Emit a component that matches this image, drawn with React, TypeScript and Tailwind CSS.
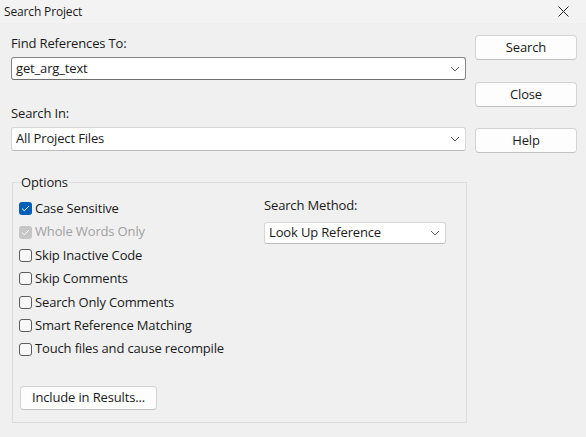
import React from 'react';

const FONT = "font-['Open_Sans','Noto_Sans',sans-serif] tracking-[-0.15px]";

const OPTIONS = [
  { label: 'Case Sensitive', state: 'checked' },
  { label: 'Whole Words Only', state: 'disabled' },
  { label: 'Skip Inactive Code', state: 'off' },
  { label: 'Skip Comments', state: 'off' },
  { label: 'Search Only Comments', state: 'off' },
  { label: 'Smart Reference Matching', state: 'off' },
  { label: 'Touch files and cause recompile', state: 'off' },
];

function Chevron() {
  return (
    <svg width="10" height="6" viewBox="0 0 10 6" className="text-[#606060]">
      <path d="M1 1l4 4 4-4" fill="none" stroke="currentColor" strokeWidth="1" />
    </svg>
  );
}

function Combo({ value, focused, className }: { value: string; focused?: boolean; className: string }) {
  return (
    <div
      className={`flex items-center justify-between bg-white rounded-[3px] border pl-[4px] pr-[5px] text-[13px] text-[#1a1a1a] ${
        focused ? 'border-[#858585] border-b-[#6f6f6f]' : 'border-[#d6d6d6] border-b-[#bcbcbc]'
      } ${className}`}
    >
      <span>{value}</span>
      <Chevron />
    </div>
  );
}

function Button({ label, className }: { label: string; className: string }) {
  return (
    <button
      type="button"
      className={`flex items-center justify-center bg-[#fdfdfd] border border-[#d4d4d4] border-b-[#c2c2c2] rounded-[4px] text-[13px] text-[#1a1a1a] ${className}`}
    >
      {label}
    </button>
  );
}

function Check({ state }: { state: string }) {
  if (state === 'off') {
    return <span className="w-[13px] h-[13px] rounded-[3px] border border-[#5c5c5c] bg-[#f8f8f8]" />;
  }
  return (
    <span
      className={`w-[13px] h-[13px] rounded-[3px] flex items-center justify-center ${
        state === 'checked' ? 'bg-[#005fb8]' : 'bg-[#c6c6c6]'
      }`}
    >
      <svg width="9" height="7" viewBox="0 0 9 7">
        <path d="M1 3.6l2.3 2.2L8 1" fill="none" stroke="white" strokeWidth="1" />
      </svg>
    </span>
  );
}

export default function App() {
  return (
    <div className={`w-[586px] h-[437px] bg-[#f0f0f0] flex flex-col ${FONT}`}>
      {/* title bar */}
      <div className="h-[23px] bg-[#f3f3f3] flex items-center justify-between pl-[4px] pr-[17px]">
        <span className="text-[12px] text-[#1a1a1a]">Search Project</span>
        <svg width="11" height="11" viewBox="0 0 11 11" className="text-[#222]">
          <path d="M0.5 0.5l10 10M10.5 0.5l-10 10" stroke="currentColor" strokeWidth="1" />
        </svg>
      </div>

      <div className="flex pl-[11px]">
        {/* left column */}
        <div className="w-[455px] flex flex-col">
          <div className="mt-[12px] h-[16px] leading-[16px] text-[13px] text-[#1a1a1a]">Find References To:</div>
          <Combo value="get_arg_text" focused className="mt-[6px] h-[23px]" />
          <div className="mt-[25px] h-[16px] leading-[16px] text-[13px] text-[#1a1a1a]">Search In:</div>
          <Combo value="All Project Files" className="mt-[6px] h-[24px]" />

          <fieldset className="ml-[1px] mt-[23px] w-[455px] border border-[#dcdcdc] pl-[6px] pb-[12px]">
            <legend className="ml-[1px] px-[1px] h-[16px] leading-[16px] text-[13px] text-[#1a1a1a]">Options</legend>
            <div className="flex">
              <div className="w-[245px] flex flex-col pt-[7px]">
                {OPTIONS.map((o) => (
                  <div key={o.label} className="h-[23.4px] flex items-center gap-[3px]">
                    <Check state={o.state} />
                    <span className={`text-[13px] ${o.state === 'disabled' ? 'text-[#a0a0a0]' : 'text-[#1a1a1a]'}`}>
                      {o.label}
                    </span>
                  </div>
                ))}
              </div>
              <div className="flex flex-col pt-[7px]">
                <div className="h-[16px] leading-[16px] text-[13px] text-[#1a1a1a]">Search Method:</div>
                <Combo value="Look Up Reference" className="mt-[9px] w-[182px] h-[22px]" />
              </div>
            </div>
            <Button label="Include in Results..." className="ml-[1px] mt-[25px] w-[137px] h-[24px]" />
          </fieldset>
        </div>

        {/* right column */}
        <div className="ml-[9px] flex flex-col">
          <Button label="Search" className="mt-[12px] w-[102px] h-[25px]" />
          <Button label="Close" className="mt-[22px] w-[102px] h-[25px]" />
          <Button label="Help" className="mt-[21px] w-[102px] h-[25px]" />
        </div>
      </div>
    </div>
  );
}
